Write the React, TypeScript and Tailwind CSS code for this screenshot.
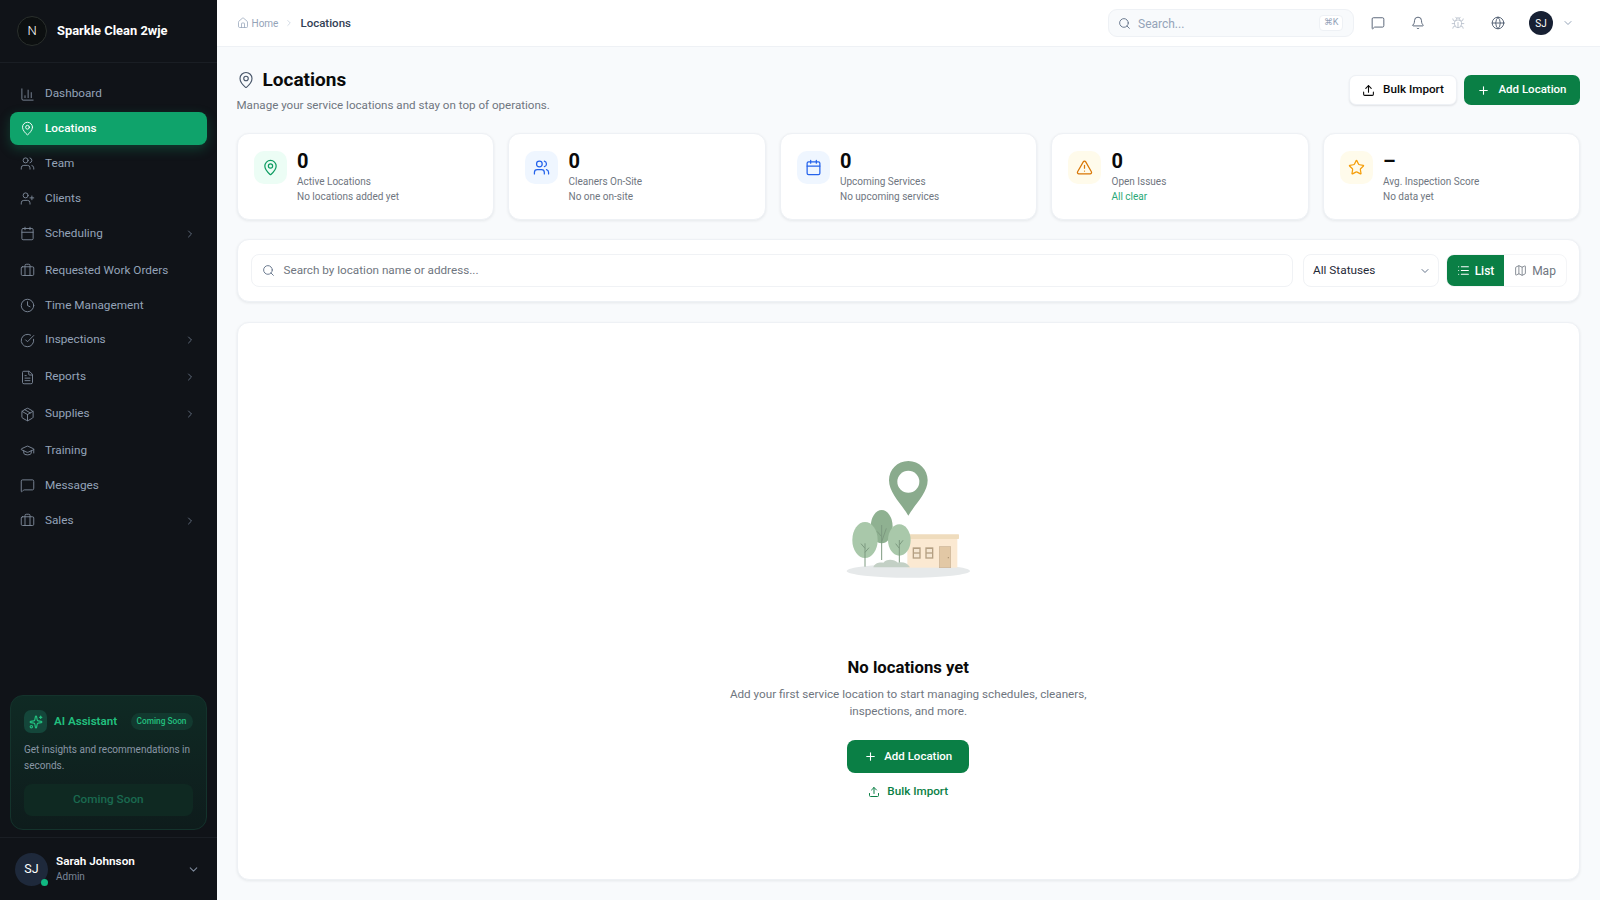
import {
  BarChart3,
  Bell,
  Briefcase,
  Bug,
  Calendar,
  ChevronDown,
  ChevronRight,
  CircleCheckBig,
  Clock,
  FileText,
  Globe,
  GraduationCap,
  House,
  List,
  Map as MapIcon,
  MapPin,
  MessageSquare,
  Package,
  Plus,
  Search,
  Sparkles,
  Star,
  TriangleAlert,
  Upload,
  UserPlus,
  Users,
} from "lucide-react";

const NAV = [
  { label: "Dashboard", icon: BarChart3 },
  { label: "Locations", icon: MapPin, active: true },
  { label: "Team", icon: Users },
  { label: "Clients", icon: UserPlus },
  { label: "Scheduling", icon: Calendar, more: true },
  { label: "Requested Work Orders", icon: Briefcase },
  { label: "Time Management", icon: Clock },
  { label: "Inspections", icon: CircleCheckBig, more: true },
  { label: "Reports", icon: FileText, more: true },
  { label: "Supplies", icon: Package, more: true },
  { label: "Training", icon: GraduationCap },
  { label: "Messages", icon: MessageSquare },
  { label: "Sales", icon: Briefcase, more: true },
];

const STATS = [
  { value: "0", label: "Active Locations", sub: "No locations added yet", icon: MapPin, box: "bg-[#ecfdf5]", color: "text-[#0f9d63]" },
  { value: "0", label: "Cleaners On-Site", sub: "No one on-site", icon: Users, box: "bg-[#eff6ff]", color: "text-[#2563eb]" },
  { value: "0", label: "Upcoming Services", sub: "No upcoming services", icon: Calendar, box: "bg-[#eff6ff]", color: "text-[#2563eb]" },
  { value: "0", label: "Open Issues", sub: "All clear", icon: TriangleAlert, box: "bg-[#fffbeb]", color: "text-[#d97706]", good: true },
  { value: "–", label: "Avg. Inspection Score", sub: "No data yet", icon: Star, box: "bg-[#fffbeb]", color: "text-[#f59e0b]" },
];

function Sidebar() {
  return (
    <aside className="flex h-full w-[216.5px] shrink-0 flex-col bg-[#101318]">
      <div className="flex h-[63px] shrink-0 items-center gap-[10px] border-b border-[#1a1e24] px-[17px]">
        <div className="flex h-[30px] w-[30px] items-center justify-center rounded-full border border-[#2a2f2c] bg-[#0c0f10] text-[13px] font-light text-white">
          N
        </div>
        <span className="text-[12.9px] font-bold text-white">Sparkle Clean 2wje</span>
      </div>

      <nav className="flex flex-col gap-[1.9px] px-[10px] pt-[14.5px]">
        {NAV.map((item) => {
          const Icon = item.icon;
          return (
            <div
              key={item.label}
              className={`flex h-[33px] items-center gap-[10px] rounded-[8px] pl-[10px] pr-[11px] text-[11.75px] ${
                item.more ? "mb-[2px]" : ""
              } ${
                item.active
                  ? "bg-[#0fa36b] font-medium text-white shadow-[0_4px_12px_rgba(15,163,107,0.3)]"
                  : "text-[#94a3b8]"
              }`}
            >
              <Icon size={15} strokeWidth={1.5} className={item.active ? "text-white" : "text-[#7c8798]"} />
              <span className="flex-1">{item.label}</span>
              {item.more && <ChevronRight size={12} className="text-[#5f6a7a]" />}
            </div>
          );
        })}
      </nav>

      <div className="mt-auto px-[10px] pb-[7px]">
        <div className="rounded-[13px] border border-[#14332c] bg-gradient-to-b from-[#0f2a24] to-[#0e1c1c] px-[13px] pb-[13px] pt-[14px]">
          <div className="flex items-center">
            <div className="flex h-[23px] w-[23px] items-center justify-center rounded-[7px] bg-[#14463a]">
              <Sparkles size={14} className="text-[#22c07f]" />
            </div>
            <span className="ml-[7px] text-[11.6px] font-semibold text-[#22c07f]">AI Assistant</span>
            <span className="ml-auto rounded-full bg-[#12392f] px-[6px] py-[2px] text-[8.3px] font-medium text-[#22c07f]">
              Coming Soon
            </span>
          </div>
          <p className="mt-[9px] text-[10px] leading-[16px] text-[#8a97a6]">
            Get insights and recommendations in seconds.
          </p>
          <div className="mt-[10px] flex h-[32px] items-center justify-center rounded-[8px] bg-[#0f2922] text-[11.75px] font-medium text-[#1a6a50]">
            Coming Soon
          </div>
        </div>
      </div>

      <div className="flex h-[63px] shrink-0 items-center border-t border-[#1a1e24] px-[15px]">
        <div className="relative flex h-[33px] w-[33px] items-center justify-center rounded-full bg-[#1e293b] text-[12.5px] text-white">
          SJ
          <span className="absolute bottom-0 right-0 h-[7px] w-[7px] rounded-full bg-[#10b981]" />
        </div>
        <div className="ml-[8px] flex-1">
          <div className="text-[11.75px] font-semibold leading-[15px] text-white">Sarah Johnson</div>
          <div className="text-[10px] leading-[15px] text-[#7c8798]">Admin</div>
        </div>
        <ChevronDown size={13} className="mr-[2px] text-[#7c8798]" />
      </div>
    </aside>
  );
}

function TopBar() {
  return (
    <header className="flex h-[47px] shrink-0 items-center border-b border-[#eef1f5] bg-white pl-[20px] pr-[26px]">
      <House size={12} strokeWidth={1.5} className="text-[#94a3b8]" />
      <span className="ml-[3px] mt-px text-[10px] text-[#94a3b8]">Home</span>
      <ChevronRight size={10} className="ml-[6px] text-[#cbd5e1]" />
      <span className="ml-[6px] mt-px text-[11.5px] font-medium text-[#334155]">Locations</span>

      <div className="ml-auto flex h-[28px] w-[246px] items-center rounded-[9px] border border-[#eef1f5] bg-[#f8fafc] pl-[9px] pr-[10px]">
        <Search size={13} strokeWidth={1.75} className="text-[#64748b]" />
        <span className="ml-[7px] mt-px text-[12px] text-[#94a3b8]">Search...</span>
        <span className="ml-auto flex h-[16px] w-[24px] items-center justify-center rounded-[4px] border border-[#eef1f5] bg-white text-[9px] text-[#94a3b8]">
          ⌘K
        </span>
      </div>

      <div className="ml-[17px] flex items-center gap-[26px]">
        <MessageSquare size={14} strokeWidth={1.5} className="text-[#475569]" />
        <Bell size={14} strokeWidth={1.5} className="text-[#475569]" />
        <Bug size={14} strokeWidth={1.5} className="text-[#b8c0cb]" />
        <Globe size={14} strokeWidth={1.5} className="text-[#475569]" />
      </div>

      <div className="ml-[24px] flex h-[24px] w-[24px] items-center justify-center rounded-full bg-[#172033] text-[10px] text-white">
        SJ
      </div>
      <ChevronDown size={12} className="ml-[9px] text-[#94a3b8]" />
    </header>
  );
}

function StatCard({ stat }: { stat: (typeof STATS)[number] }) {
  const Icon = stat.icon;
  return (
    <div className="flex h-[87px] items-start rounded-[12px] border border-[#eef1f5] bg-white pl-[16px] pt-[17px] shadow-[0_1px_3px_rgba(15,23,42,0.08)]">
      <div className={`flex h-[33px] w-[33px] items-center justify-center rounded-[10px] ${stat.box}`}>
        <Icon size={17} strokeWidth={1.75} className={stat.color} />
      </div>
      <div className="ml-[10.5px] -mt-[3px]">
        <div className="text-[20px] font-bold leading-[26px] text-[#0a0a0a]">{stat.value}</div>
        <div className="text-[10px] leading-[15px] text-[#6f7680]">{stat.label}</div>
        <div className={`text-[10px] leading-[15px] ${stat.good ? "text-[#2aa877]" : "text-[#6f7680]"}`}>
          {stat.sub}
        </div>
      </div>
    </div>
  );
}

function EmptyIllustration() {
  return (
    <svg width="160" height="145" viewBox="0 0 480 435" aria-hidden="true" className="mr-[16px]">
      <ellipse cx="265" cy="378" rx="185" ry="20" fill="#e6e9ea" />
      <rect x="262" y="278" width="150" height="90" fill="#fbe9d2" />
      <rect x="262" y="268" width="155" height="14" rx="2" fill="#efdcbd" />
      <rect x="278" y="307" width="24" height="34" fill="#b5a083" />
      <rect x="282" y="312" width="16" height="10" fill="#f5e7d3" />
      <rect x="282" y="326" width="16" height="11" fill="#f5e7d3" />
      <rect x="316" y="307" width="24" height="34" fill="#b5a083" />
      <rect x="320" y="312" width="16" height="10" fill="#f5e7d3" />
      <rect x="320" y="326" width="16" height="11" fill="#f5e7d3" />
      <rect x="358" y="305" width="34" height="63" fill="#e2c8a5" stroke="#c9b397" strokeWidth="2" />
      <circle cx="385" cy="338" r="2" fill="#a68d6d" />
      <ellipse cx="185" cy="245" rx="33" ry="50" fill="#8fb191" />
      <ellipse cx="135" cy="285" rx="38" ry="54" fill="#a9c8aa" />
      <ellipse cx="238" cy="285" rx="34" ry="47" fill="#a9c8aa" />
      <path d="M135 365V295M135 310l-12-14M135 322l12-14" fill="none" stroke="#7d9a80" strokeWidth="3" />
      <path d="M185 345V240M185 275l-14-16M185 290l14-40" fill="none" stroke="#7d9a80" strokeWidth="3" />
      <path d="M238 365V285M238 310l-11-14M238 300l11-14" fill="none" stroke="#7d9a80" strokeWidth="3" />
      <path d="M160 367c4-14 20-16 30-14 8-12 32-12 44 0 14-4 30 2 36 14z" fill="#c3d0c5" />
      <path
        d="M265 48c-33 0-58 26-58 58 0 38 38 72 58 106 20-34 58-68 58-106 0-32-25-58-58-58z"
        fill="#8aab8d"
      />
      <circle cx="265" cy="110" r="33" fill="white" />
    </svg>
  );
}

export default function App() {
  return (
    <div className="flex h-screen w-full overflow-hidden bg-[#f8fafc] font-['Roboto',sans-serif]">
      <Sidebar />
      <div className="flex min-w-0 flex-1 flex-col">
        <TopBar />
        <main className="flex min-h-0 flex-1 flex-col px-[20px] pb-[20px]">
          <div className="flex h-[86px] shrink-0 items-start justify-between pt-[21px]">
            <div>
              <div className="flex items-center gap-[8px]">
                <MapPin size={18} strokeWidth={1.5} className="text-[#475569]" />
                <h1 className="text-[19px] font-bold leading-[24px] text-[#0a0a0a]">Locations</h1>
              </div>
              <p className="mt-[4px] text-[11.6px] leading-[18px] text-[#6f7680]">
                Manage your service locations and stay on top of operations.
              </p>
            </div>
            <div className="mt-[7px] flex items-center gap-[7px]">
              <button className="flex h-[30px] w-[108px] items-center justify-center gap-[8px] rounded-[7px] border border-[#eef1f5] bg-white text-[11.7px] font-medium text-[#0a0a0a] shadow-[0_1px_2px_rgba(15,23,42,0.1)]">
                <Upload size={13} />
                Bulk Import
              </button>
              <button className="flex h-[30px] w-[116px] items-center justify-center gap-[8px] rounded-[7px] bg-[#0a7f45] text-[11.5px] font-medium text-white">
                <Plus size={13} />
                Add Location
              </button>
            </div>
          </div>

          <div className="grid shrink-0 grid-cols-5 gap-[14px]">
            {STATS.map((stat) => (
              <StatCard key={stat.label} stat={stat} />
            ))}
          </div>

          <div className="mt-[19px] flex h-[63px] shrink-0 items-center rounded-[12px] border border-[#eef1f5] bg-white pl-[13px] pr-[12px] shadow-[0_1px_3px_rgba(15,23,42,0.08)]">
            <div className="flex h-[33px] flex-1 items-center rounded-[8px] border border-[#f0f2f5] bg-white pl-[10px]">
              <Search size={13} strokeWidth={1.75} className="text-[#64748b]" />
              <span className="ml-[9px] text-[11.7px] text-[#6f7680]">Search by location name or address...</span>
            </div>
            <div className="ml-[10px] flex h-[33px] w-[136px] items-center justify-between rounded-[8px] border border-[#f0f2f5] pl-[9px] pr-[7px] text-[11.8px] text-[#1f2937]">
              All Statuses
              <ChevronDown size={12} className="text-[#64748b]" />
            </div>
            <div className="ml-[7px] flex h-[33px] overflow-hidden rounded-[8px] border border-[#f4f5f7]">
              <div className="flex w-[57px] items-center justify-center gap-[5px] bg-[#0a7f45] text-[12px] font-medium text-white">
                <List size={13} />
                List
              </div>
              <div className="flex w-[62px] items-center justify-center gap-[5px] text-[12px] text-[#6f7680]">
                <MapIcon size={13} strokeWidth={1.5} />
                Map
              </div>
            </div>
          </div>

          <section className="mt-[20px] flex min-h-0 flex-1 flex-col items-center rounded-[12px] border border-[#eef1f5] bg-white pt-[122px] shadow-[0_1px_3px_rgba(15,23,42,0.08)]">
            <EmptyIllustration />
            <h2 className="mt-[66px] text-[16.7px] font-bold leading-[24px] text-[#0a0a0a]">No locations yet</h2>
            <p className="mt-[6px] w-[380px] text-center text-[11.7px] leading-[17px] text-[#6f7680]">
              Add your first service location to start managing schedules, cleaners, inspections, and more.
            </p>
            <button className="mt-[20px] flex h-[33px] w-[122px] items-center justify-center gap-[7px] rounded-[8px] bg-[#0a7f45] text-[11.5px] font-medium text-white">
              <Plus size={13} />
              Add Location
            </button>
            <button className="mt-[9px] flex h-[20px] items-center gap-[7px] text-[11.7px] font-medium text-[#0a7f45]">
              <Upload size={12} />
              Bulk Import
            </button>
          </section>
        </main>
      </div>
    </div>
  );
}
